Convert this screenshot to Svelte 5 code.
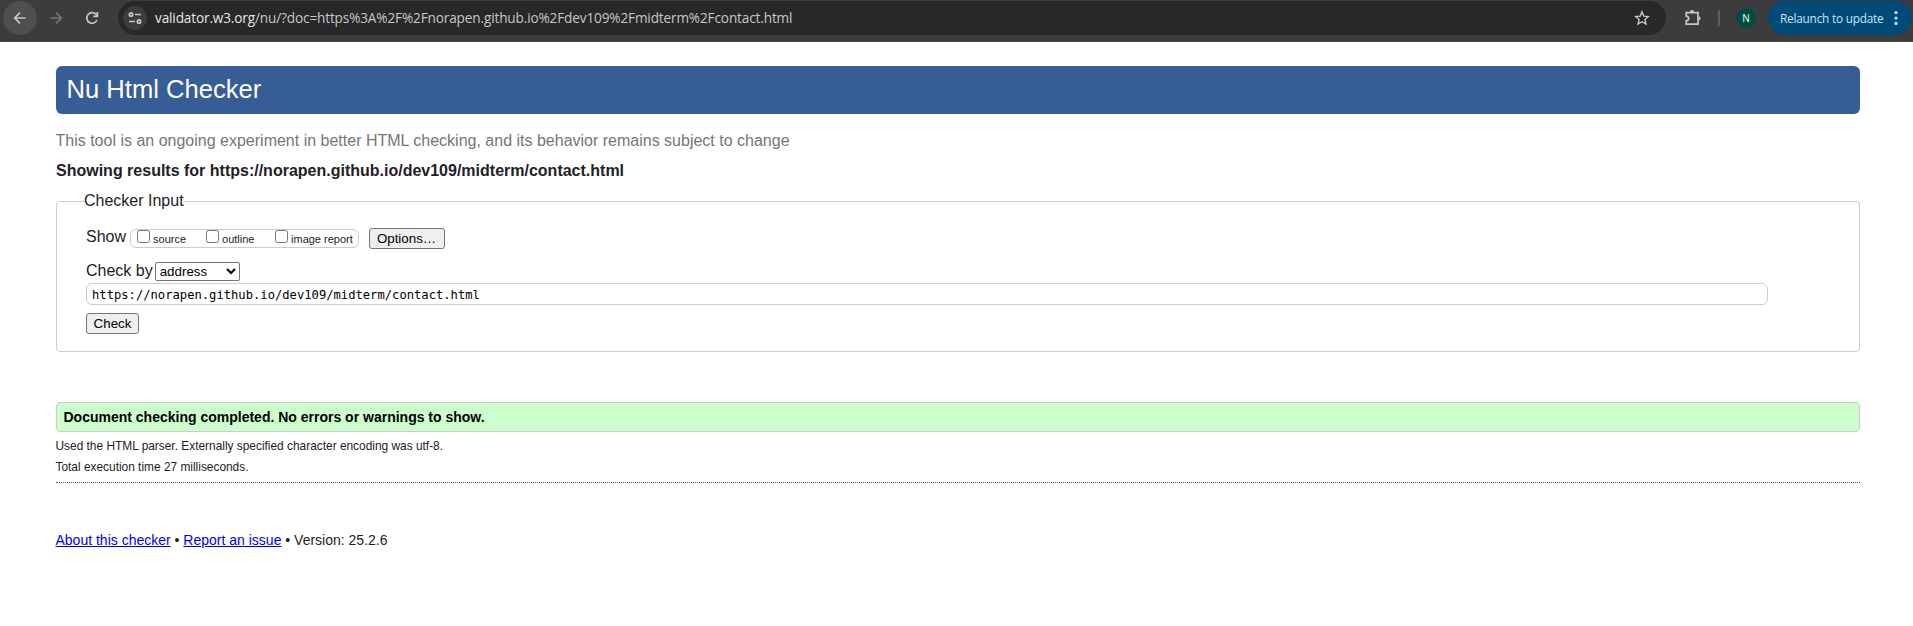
<script>
  const url = 'https://norapen.github.io/dev109/midterm/contact.html';
  let docUrl = $state(url);
</script>

<div class="toolbar">
  <span class="back">
    <svg width="16" height="16" viewBox="0 0 16 16"><path d="M13.5 8H3M8 2.7 2.7 8 8 13.3" /></svg>
  </span>
  <svg class="forward" width="16" height="16" viewBox="0 0 16 16"><path d="M2.2 8h10.5M8 2.7 13.3 8 8 13.3" /></svg>
  <svg class="reload" width="16" height="16" viewBox="0 0 16 16"><path d="M13 10a5.3 5.3 0 1 1-1.2-5.9L13.4 6" /><path d="M13.4 2v4.3H9.2" /></svg>
  <div class="omnibox">
    <span class="site">
      <svg width="14" height="14" viewBox="0 0 14 14"><circle cx="3" cy="3.5" r="1.7" /><path d="M7 3.5h6M1 10.5h6" /><circle cx="11" cy="10.5" r="1.7" /></svg>
    </span>
    <span class="url"><b>validator.w3.org</b>/nu/?doc=https%3A%2F%2Fnorapen.github.io%2Fdev109%2Fmidterm%2Fcontact.html</span>
    <svg class="star" width="16" height="16" viewBox="0 0 16 16"><path d="m8 1.8 1.8 4.3 4.6.4-3.5 3 1.1 4.6L8 11.7l-4 2.4 1.1-4.6-3.5-3 4.6-.4z" /></svg>
  </div>
  <svg class="puzzle" width="18" height="18" viewBox="0 0 18 18"><path d="M2.2 3.6H14v11.6H2.2v-3.5c3.3-.4 3.3-4.2 0-4.6z" /><path class="solid" d="M5.8 3a2.1 2.1 0 0 1 4.2 0zM14.5 7.2a2.1 2.1 0 0 1 0 4.2z" /></svg>
  <span class="divider"></span>
  <span class="avatar">N</span>
  <span class="update"><span class="relaunch">Relaunch to update</span><svg width="4" height="16" viewBox="0 0 4 16"><circle cx="2" cy="2.6" r="1.6" /><circle cx="2" cy="8" r="1.6" /><circle cx="2" cy="13.4" r="1.6" /></svg></span>
</div>

<main>
  <h1>Nu Html Checker</h1>
  <p class="tagline">This tool is an ongoing experiment in better HTML checking, and its behavior remains subject to change</p>
  <h2>Showing results for {url}</h2>

  <form onsubmit={(e) => e.preventDefault()}>
    <fieldset>
      <legend>Checker Input</legend>
      <div class="row show">
        <span class="lead">Show</span>
        <span class="checks">
          <label><input type="checkbox" /><span>source</span></label>
          <label><input type="checkbox" /><span>outline</span></label>
          <label><input type="checkbox" /><span>image report</span></label>
        </span>
        <button type="button" class="options">Options…</button>
      </div>
      <div class="row by">
        <span class="lead">Check by</span>
        <select><option>address</option><option>file upload</option><option>text input</option></select>
      </div>
      <input class="doc" type="text" spellcheck="false" bind:value={docUrl} />
      <button type="submit" class="check">Check</button>
    </fieldset>
  </form>

  <p class="success">Document checking completed. No errors or warnings to show.</p>
  <p class="detail parser">Used the HTML parser. Externally specified character encoding was utf-8.</p>
  <p class="detail">Total execution time 27 milliseconds.</p>
  <hr />
  <footer><a href="#about">About this checker</a> • <a href="#issue">Report an issue</a> • Version: 25.2.6</footer>
</main>

<style>
  :global(body) {
    background: #fff;
    font-family: 'Liberation Sans', Arial, sans-serif;
    color: #1f2126;
    overflow: hidden;
  }
  .toolbar {
    display: flex;
    align-items: center;
    box-sizing: border-box;
    height: 42px;
    padding: 1px 1px 6px 3px;
    border-bottom: 1px solid #484848;
    background: #3c3c3c;
    white-space: nowrap;
  }
  svg {
    flex: none;
    fill: none;
    stroke: #c7c7c7;
    stroke-width: 1.7;
  }
  .back {
    display: grid;
    place-items: center;
    width: 34px;
    height: 34px;
    border-radius: 50%;
    background: #4f4f4f;
  }
  .forward { margin-left: 11px; stroke: #757575; }
  .reload { margin: 0 18px 0 20px; }
  .omnibox {
    display: flex;
    align-items: center;
    box-sizing: border-box;
    width: 1548px;
    height: 34px;
    padding: 0 16px 0 5px;
    border-radius: 17px;
    background: #282828;
  }
  .site {
    display: grid;
    place-items: center;
    width: 24px;
    height: 24px;
    border-radius: 50%;
    background: #3c3c3c;
  }
  .url {
    flex: 1;
    margin-left: 8px;
    font: 13.6px/20px 'Open Sans', sans-serif;
    letter-spacing: -0.14px;
    color: #c7c7c7;
  }
  .url b { font-weight: 400; color: #e6e6e6; }
  .star { stroke-width: 1.4; }
  .puzzle { margin-left: 18px; }
  .puzzle .solid { fill: #c7c7c7; stroke: none; }
  .divider {
    width: 2px;
    height: 16px;
    margin: 0 16px;
    background: #5e5e5e;
  }
  .avatar {
    width: 20px;
    height: 20px;
    border-radius: 50%;
    background: #004d40;
    color: #fff;
    font: 10px/20px 'Open Sans', sans-serif;
    text-align: center;
  }
  .update {
    display: flex;
    align-items: center;
    box-sizing: border-box;
    width: 144px;
    height: 34px;
    margin-left: 12px;
    padding: 0 14px 0 12px;
    border-radius: 17px;
    justify-content: space-between;
    background: #004a77;
    color: #c2e7ff;
    font: 11.8px/20px 'Open Sans', sans-serif;
    letter-spacing: -0.21px;
  }
  .update svg { fill: #c2e7ff; stroke: none; }
  main { padding: 24px 53px 0 56px; }
  h1 {
    height: 46px;
    margin: 0;
    padding: 0 10.5px 2px;
    border-radius: 6px;
    background: #365d95;
    color: #fff;
    font-size: 25.6px;
    font-weight: 400;
    line-height: 46px;
  }
  p { margin: 0; }
  .tagline { margin: 17px 0 0 -0.5px; line-height: 20px; color: #767676; }
  h2 { margin: 10px 0 0; font-size: 16px; line-height: 20px; }
  fieldset {
    box-sizing: border-box;
    height: 161px;
    margin: 10px 0 0;
    padding: 16px 29px 0 29px;
    border: 1px solid #ccc;
    border-radius: 4px;
  }
  legend { margin-left: -2px; padding: 0; line-height: 20px; }
  .row { display: flex; }
  .lead { line-height: 20px; }
  .show { height: 34px; }
  .checks {
    display: flex;
    box-sizing: border-box;
    width: 229px;
    height: 19px;
    margin: 2px 10px 0 3.5px;
    padding-left: 6px;
    border: 1px solid #ccc;
    border-radius: 6px;
  }
  label {
    display: flex;
    width: 69px;
    flex: none;
    font-size: 11px;
    line-height: 18px;
    white-space: nowrap;
  }
  label input { width: 13px; height: 13px; margin: 0 3.5px 0 0; }
  button {
    display: block;
    box-sizing: border-box;
    height: 21px;
    padding: 0;
    border: 1px solid #767676;
    border-radius: 3px;
    background: #efefef;
    color: #000;
    font: 13.333px/19px 'Liberation Sans', Arial, sans-serif;
  }
  .options { width: 76px; margin-top: 1px; }
  .check { width: 53px; margin-top: 8px; }
  .by { height: 22px; }
  select {
    box-sizing: border-box;
    width: 85px;
    height: 19px;
    margin: 1px 0 0 2px;
    border: 1px solid #767676;
    border-radius: 2px;
    background: #fff;
    color: #000;
    font: 13.333px 'Liberation Sans', Arial, sans-serif;
  }
  .doc {
    display: block;
    box-sizing: border-box;
    width: 1682px;
    height: 22px;
    margin: 0;
    padding: 2px 5px 0;
    border: 1px solid #ccc;
    border-radius: 6px;
    outline: none;
    color: #000;
    font: 12.17px 'DejaVu Sans Mono', monospace;
  }
  .success {
    box-sizing: border-box;
    height: 30px;
    margin-top: 50px;
    padding-left: 6.5px;
    border: 1px solid #ccc;
    border-radius: 4px;
    background: #cfc;
    color: #000;
    font-size: 14px;
    font-weight: 700;
    line-height: 28px;
  }
  .detail { margin-left: -0.5px; font-size: 11.9px; line-height: 21px; }
  .parser { margin-top: 4px; }
  hr { margin: 4px 0 0; border: 0; border-top: 1px dotted #555; }
  footer { margin: 47px 0 0 -0.5px; font-size: 14px; line-height: 20px; }
  a { color: #00e; }
</style>
